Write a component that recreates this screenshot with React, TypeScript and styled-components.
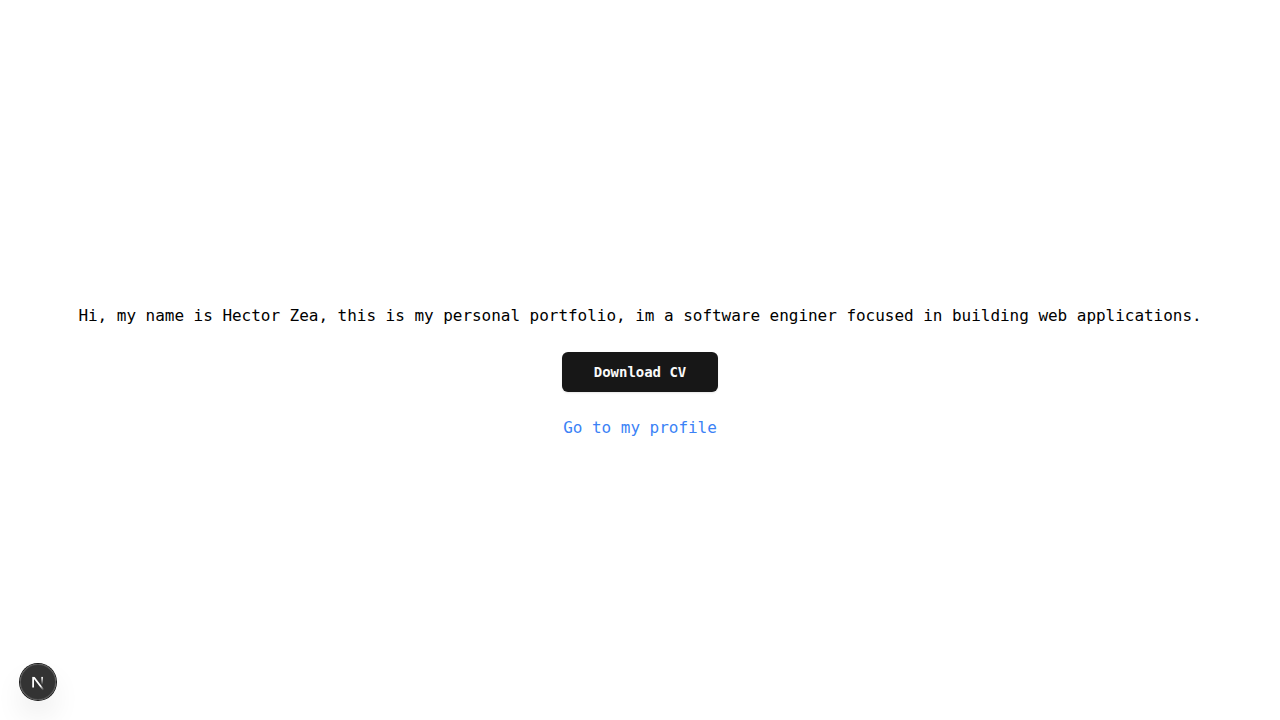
import styled, { createGlobalStyle } from "styled-components";

const GlobalStyle = createGlobalStyle`
  *, *::before, *::after { box-sizing: border-box; }
  body {
    margin: 0;
    background: #fff;
    color: #000;
    font-family: "DejaVu Sans Mono", "Liberation Mono", monospace;
    -webkit-font-smoothing: antialiased;
  }
`;

const Page = styled.main`
  min-height: 100vh;
  display: flex;
  flex-direction: column;
  align-items: center;
  justify-content: center;
  gap: 24px;
  padding-top: 24px;
`;

const Intro = styled.p`
  margin: 0;
  font-size: 16px;
  line-height: 24px;
  letter-spacing: -0.033px;
  white-space: nowrap;
`;

const DownloadButton = styled.button`
  height: 40px;
  width: 156px;
  padding: 0;
  border: 0;
  border-radius: 6px;
  background: #171717;
  color: #fafafa;
  font-family: inherit;
  font-size: 14px;
  font-weight: 700;
  line-height: 20px;
  letter-spacing: -0.028px;
  box-shadow: 0 1px 2px rgba(0, 0, 0, 0.1);
  cursor: pointer;
`;

const ProfileLink = styled.a`
  color: #3b82f6;
  font-size: 16px;
  line-height: 24px;
  letter-spacing: -0.033px;
  text-decoration: none;
`;

const DevBadge = styled.button`
  position: fixed;
  left: 20px;
  bottom: 20px;
  width: 36px;
  height: 36px;
  padding: 0;
  border: 0;
  border-radius: 50%;
  background: rgba(0, 0, 0, 0.8);
  box-shadow: 0 0 0 1px #171717, inset 0 0 0 1px hsla(0, 0%, 100%, 0.14),
    0 16px 32px -8px rgba(0, 0, 0, 0.24);

  svg { display: block; }
`;

function NextMark() {
  return (
    <svg width="36" height="36" viewBox="0 0 36 36" fill="none">
      <g transform="translate(10.9 11.5) scale(0.95)">
        <path d="M13.3 15.2 L2.34 1 V12.6" stroke="url(#diagonal)" strokeWidth="1.86" mask="url(#corner)" />
        <path d="M11.825 1.5 V13.1" stroke="url(#stem)" strokeWidth="1.86" />
      </g>
      <defs>
        <linearGradient id="diagonal" x1="9.95555" y1="11.1226" x2="15.4778" y2="17.9671" gradientUnits="userSpaceOnUse">
          <stop stopColor="white" />
          <stop offset="0.604072" stopColor="white" stopOpacity="0" />
          <stop offset="1" stopColor="white" stopOpacity="0" />
        </linearGradient>
        <linearGradient id="stem" x1="11.8222" y1="1.40039" x2="11.791" y2="9.62542" gradientUnits="userSpaceOnUse">
          <stop stopColor="white" />
          <stop offset="1" stopColor="white" stopOpacity="0" />
        </linearGradient>
        <mask id="corner" maskUnits="userSpaceOnUse" x="0" y="0" width="20" height="20">
          <rect width="20" height="20" fill="white" />
          <rect width="5" height="1.5" fill="black" />
        </mask>
      </defs>
    </svg>
  );
}

export default function App() {
  return (
    <>
      <GlobalStyle />
      <Page>
        <Intro>
          Hi, my name is Hector Zea, this is my personal portfolio, im a software enginer focused in building web applications.
        </Intro>
        <DownloadButton>Download CV</DownloadButton>
        <ProfileLink href="#">Go to my profile</ProfileLink>
      </Page>
      <DevBadge aria-label="Open Next.js Dev Tools">
        <NextMark />
      </DevBadge>
    </>
  );
}
